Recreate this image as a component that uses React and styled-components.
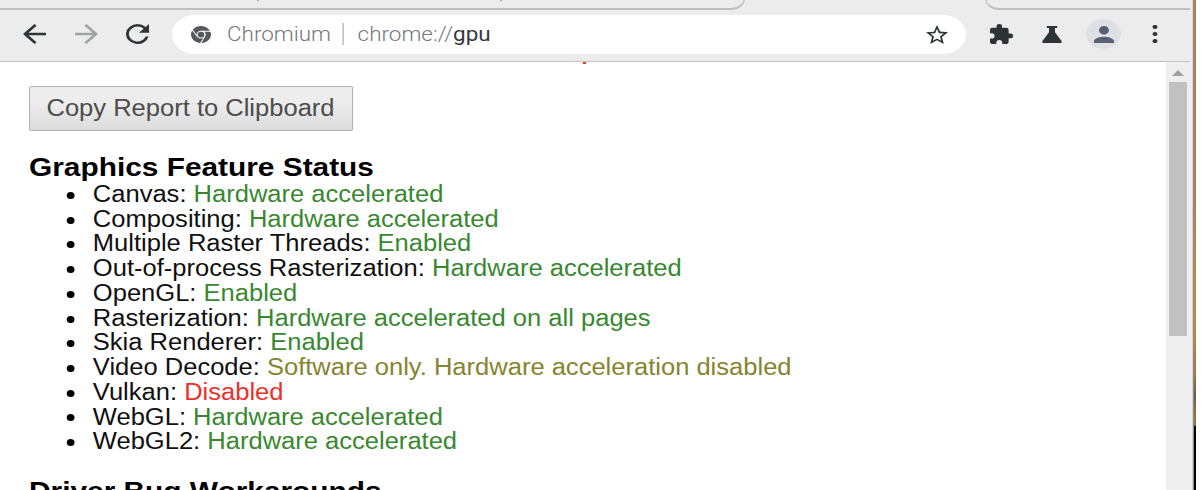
import React from 'react';
import styled, { createGlobalStyle } from 'styled-components';

const Global = createGlobalStyle`
  * { box-sizing: border-box; }
  body { margin: 0; background: #fff; overflow: hidden; }
`;

const Desktop = styled.div`
  width: 1202px;
  height: 490px;
  display: flex;
  overflow: hidden;
  background: #fff;
`;

const Window = styled.div`
  width: 1192px;
  flex: none;
  display: flex;
  flex-direction: column;
  background: #ececec;
`;

const WindowShadow = styled.div`
  width: 2px;
  flex: none;
  background: linear-gradient(90deg, #d4d4d4 50%, #8f8c88 50%);
`;

const Wallpaper = styled.div`
  width: 2px;
  flex: none;
  background: linear-gradient(#b08145 0, #b58142 200px, #cb8c3c 320px, #a87538 375px, #6e5a45 395px, #9a7040 415px, #9a7040 425px, #000 427px);
`;

const TabStrip = styled.div`
  height: 10px;
  flex: none;
  display: flex;
  justify-content: space-between;
  align-items: flex-end;
  width: 1190px;
  overflow: hidden;
`;

const InactiveTabs = styled.div`
  width: ${(p) => p.$width}px;
  height: 24px;
  flex: none;
  border-bottom: 2px solid #bfbfbf;
  ${(p) => (p.$side === 'left'
    ? 'border-right: 1px solid #b8b8b8; border-bottom-right-radius: 14px 12px;'
    : 'border-left: 1px solid #b8b8b8; border-bottom-left-radius: 14px 12px;')}
`;

const TabTitle = styled.div`
  display: flex;
  align-items: flex-end;
  gap: 241px;
  height: 15px;
  padding-left: 257px;
`;

const Descender = styled.span`
  width: 2px;
  height: 1px;
  background: #aaa;
`;

const Toolbar = styled.div`
  height: 52px;
  width: 1190px;
  flex: none;
  display: flex;
  align-items: center;
  padding: 0 21px 3px 22px;
  border-bottom: 1px solid #c4c4c4;
`;

const Icon = styled.svg`
  display: block;
  flex: none;
  width: ${(p) => p.$w}px;
  height: ${(p) => p.$h}px;
  margin-left: ${(p) => p.$gap || 0}px;
  fill: ${(p) => p.$color || '#2d3436'};
`;

const Omnibox = styled.div`
  width: 794px;
  height: 39px;
  margin-left: 23px;
  padding: 0 18px 0 19px;
  border-radius: 23px / 19.5px;
  background: #fff;
  display: flex;
  align-items: center;
`;

const Address = styled.div`
  flex: 1;
  height: 24px;
  margin: 0 0 1px 16px;
  display: flex;
  align-items: center;
  transform: scaleX(1.09);
  transform-origin: 0 50%;
  font: 300 20.6px/24px Roboto, sans-serif;
  white-space: pre;
  color: #74777d;
`;

const Divider = styled.span`
  width: 1.4px;
  height: 22px;
  margin: 0 12.5px 0 10.5px;
  background: #a3a5a8;
`;

const Path = styled.span`
  color: #35363b;
  font-weight: 400;
`;

const Avatar = styled.div`
  width: 35px;
  height: 30px;
  margin-left: 24px;
  border-radius: 50%;
  background: #dee0e6;
  display: flex;
  align-items: center;
  justify-content: center;
`;

const Viewport = styled.div`
  flex: 1;
  min-height: 0;
  display: flex;
  overflow: hidden;
`;

const Page = styled.div`
  width: 1166px;
  flex: none;
  padding-left: 29px;
  background: #fff;
  overflow: hidden;
`;

const Clipped = styled.div`
  height: 24px;
  padding-left: 554px;
`;

const RedMark = styled.div`
  width: 3px;
  height: 2px;
  background: #f4372a;
`;

const Stretch = styled.div`
  width: 900px;
  transform: scaleX(1.11);
  transform-origin: 0 0;
  font: 23px/24.73px "Liberation Sans", Arial, sans-serif;
  white-space: nowrap;
  color: #101010;
`;

const CopyButton = styled.button`
  display: block;
  width: 292px;
  height: 45px;
  padding: 0 1px 2px 0;
  border: 1.5px solid #b3b3b3;
  border-radius: 2px;
  background: linear-gradient(#ededed 35%, #dcdcdc);
  font: 23px/24px "Liberation Sans", Arial, sans-serif;
  color: #4c4c4c;
`;

const Heading = styled.h3`
  margin: ${(p) => p.$top}px 0 0;
  font-size: 26px;
  line-height: 28px;
  font-weight: 700;
  color: #000;
  transform: scaleX(1.034);
  transform-origin: 0 0;
`;

const FeatureList = styled.ul`
  margin: 0;
  padding: 1px 0 0 57.5px;
  list-style: none;
`;

const Feature = styled.li`
  display: flex;
  align-items: center;
  &::before {
    content: '';
    width: 7px;
    height: 7px;
    margin: 2px 16.2px 0 -23.2px;
    border-radius: 50%;
    background: #000;
  }
`;

const Status = styled.span`
  white-space: pre;
  color: ${(p) => ({ ok: '#38882f', warn: '#85852f', off: '#ee2f2a' })[p.$kind]};
`;

const Scrollbar = styled.div`
  flex: 1;
  display: flex;
  flex-direction: column;
  padding: 8px 0 0 3px;
  background: #efefef;
`;

const Thumb = styled.div`
  width: 18px;
  height: 254px;
  margin-top: 6px;
  background: #c1c1c1;
`;

const features = [
  ['Canvas', 'Hardware accelerated', 'ok'],
  ['Compositing', 'Hardware accelerated', 'ok'],
  ['Multiple Raster Threads', 'Enabled', 'ok'],
  ['Out-of-process Rasterization', 'Hardware accelerated', 'ok'],
  ['OpenGL', 'Enabled', 'ok'],
  ['Rasterization', 'Hardware accelerated on all pages', 'ok'],
  ['Skia Renderer', 'Enabled', 'ok'],
  ['Video Decode', 'Software only. Hardware acceleration disabled', 'warn'],
  ['Vulkan', 'Disabled', 'off'],
  ['WebGL', 'Hardware accelerated', 'ok'],
  ['WebGL2', 'Hardware accelerated', 'ok'],
];

function Glyph({ box, w, h, gap, color, children }) {
  return (
    <Icon viewBox={box} preserveAspectRatio="none" $w={w} $h={h} $gap={gap} $color={color}>
      {children}
    </Icon>
  );
}

export default function App() {
  return (
    <Desktop>
      <Global />
      <Window>
        <TabStrip>
          <InactiveTabs $side="left" $width={745}>
            <TabTitle><Descender /><Descender /></TabTitle>
          </InactiveTabs>
          <InactiveTabs $side="right" $width={205} />
        </TabStrip>
        <Toolbar>
          <Glyph box="4 4 16 16" w={23} h={20} gap={1}>
            <path d="M20 11H7.83l5.59-5.59L12 4l-8 8 8 8 1.41-1.41L7.83 13H20z" />
          </Glyph>
          <Glyph box="4 4 16 16" w={23} h={20} gap={29} color="#a0a2a3">
            <path d="M12 4l-1.41 1.41L16.17 11H4v2h12.17l-5.58 5.59L12 20l8-8z" />
          </Glyph>
          <Glyph box="4 4 16 16" w={23} h={20} gap={28}>
            <path d="M17.65 6.35A7.95 7.95 0 0 0 12 4a8 8 0 1 0 7.73 10h-2.08A6 6 0 1 1 12 6c1.66 0 3.14.69 4.22 1.78L13 11h7V4z" />
          </Glyph>
          <Omnibox>
            <Glyph box="0 0 24 24" w={20} h={17} color="#55595f">
              <path fillRule="evenodd" d="M12 6.6h10.7A12 12 0 0 0 2.2 5.1l4.4 7.2A5.6 5.6 0 0 1 12 6.6zM1.4 6.4A12 12 0 0 0 10.8 24l4.3-7.3A5.6 5.6 0 0 1 7 14.7zM12.5 24A12 12 0 0 0 23.3 8.1h-7.4a5.6 5.6 0 0 1 1 6.9zM12 8a4.1 4.1 0 1 0 0 8.2A4.1 4.1 0 0 0 12 8z" />
            </Glyph>
            <Address>
              <span>Chromium</span>
              <Divider />
              <span>chrome://</span>
              <Path>gpu</Path>
            </Address>
            <Glyph box="2 2 20 19" w={22} h={19}>
              <path d="M22 9.24l-7.19-.62L12 2 9.19 8.63 2 9.24l5.46 4.73L5.82 21 12 17.27 18.18 21l-1.63-7.03zM12 15.4l-3.76 2.27 1-4.28-3.32-2.88 4.38-.38L12 6.1l1.71 4.04 4.38.38-3.32 2.88 1 4.28z" />
            </Glyph>
          </Omnibox>
          <Glyph box="2 1 21 21" w={23} h={20} gap={24}>
            <path d="M20.5 11H19V7a2 2 0 0 0-2-2h-4V3.5a2.5 2.5 0 0 0-5 0V5H4a2 2 0 0 0-2 2v3.8h1.500a2.7 2.7 0 0 1 0 5.4H2V20a2 2 0 0 0 2 2h3.8v-1.500a2.7 2.7 0 0 1 5.4 0V22H17a2 2 0 0 0 2-2v-4h1.500a2.5 2.5 0 0 0 0-5z" />
          </Glyph>
          <Glyph box="0 0 20 17" w={20} h={17} gap={29}>
            <path d="M4.8 0h10.4v1.9H13v4.3l6.5 8.8q1 2-1 2h-17q-2 0-1-2L7 6.2V1.9H4.8z" />
          </Glyph>
          <Avatar>
            <Glyph box="4 4 16 16" w={20} h={17} color="#575f72">
              <path d="M12 12a4 4 0 1 0 0-8 4 4 0 0 0 0 8zm0 2c-2.67 0-8 1.34-8 4v2h16v-2c0-2.66-5.33-4-8-4z" />
            </Glyph>
          </Avatar>
          <Glyph box="0 0 6 18" w={6} h={18} gap={31}>
            <ellipse cx="3" cy="2" rx="2.5" ry="2.1" />
            <ellipse cx="3" cy="9" rx="2.5" ry="2.1" />
            <ellipse cx="3" cy="16" rx="2.5" ry="2.1" />
          </Glyph>
        </Toolbar>
        <Viewport>
          <Page>
            <Clipped><RedMark /></Clipped>
            <Stretch>
              <CopyButton>Copy Report to Clipboard</CopyButton>
              <Heading $top={22}>Graphics Feature Status</Heading>
              <FeatureList>
                {features.map(([name, status, kind]) => (
                  <Feature key={name}>
                    <span>{name}:</span>
                    <Status $kind={kind}> {status}</Status>
                  </Feature>
                ))}
              </FeatureList>
              <Heading $top={23}>Driver Bug Workarounds</Heading>
            </Stretch>
          </Page>
          <Scrollbar>
            <Glyph box="0 0 12 6" w={12} h={6} gap={3} color="#a0a0a0">
              <path d="M6 0l6 6H0z" />
            </Glyph>
            <Thumb />
          </Scrollbar>
        </Viewport>
      </Window>
      <WindowShadow />
      <Wallpaper />
    </Desktop>
  );
}
